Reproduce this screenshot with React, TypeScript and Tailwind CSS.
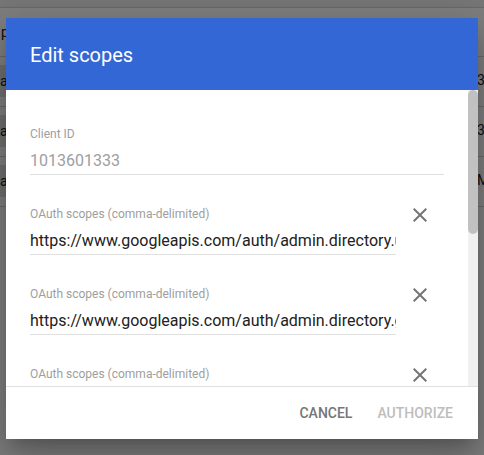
const SCOPES = [
  'https://www.googleapis.com/auth/admin.directory.user',
  'https://www.googleapis.com/auth/admin.directory.group',
  'https://www.googleapis.com/auth/admin.directory.orgunit',
  'https://www.googleapis.com/auth/admin.directory.device.chromeos',
  'https://www.googleapis.com/auth/admin.directory.domain',
  'https://www.googleapis.com/auth/admin.reports.audit.readonly',
];

const ROWS = [
  { left: 'a', right: '3 scopes' },
  { left: 'a', right: '3 scopes' },
  { left: 'a', right: 'Marketing' },
];

const CloseIcon = () => (
  <svg className="h-6 w-6" viewBox="0 0 24 24" fill="#757575">
    <path d="M19 6.41L17.59 5 12 10.59 6.41 5 5 6.41 10.59 12 5 17.59 6.41 19 12 13.41 17.59 19 19 17.59 13.41 12z" />
  </svg>
);

type FieldProps = { label: string; value: string; disabled?: boolean };

const Field = ({ label, value, disabled }: FieldProps) => (
  <div className="flex min-w-0 flex-1 flex-col">
    <span className="text-xs leading-4 text-[#9e9e9e]">{label}</span>
    <input
      readOnly
      value={value}
      className={`mt-1.5 h-[27px] w-full border-b border-[#e0e0e0] bg-transparent p-0 pb-[2px] text-base leading-6 outline-none ${
        disabled ? 'text-[#9e9e9e]' : 'text-[#212121]'
      }`}
    />
  </div>
);

// Admin table sitting behind the modal
const Page = () => (
  <div className="absolute inset-0 bg-white text-sm text-[#212121]">
    <div className="h-2 border-b border-[#d4d4d4] bg-[#eeeeee]" />
    <div className="flex h-[49px] items-center border-b border-[#d4d4d4]">
      <span className="pl-px">pe</span>
    </div>
    {ROWS.map((row, i) => (
      <div key={i} className="flex h-[50px] border-b border-[#d4d4d4]">
        <div className="w-[477px] shrink-0 pt-2">
          <div className="flex h-8 w-[30px] items-center bg-[#e0e0e0]">
            <span>{row.left}</span>
          </div>
        </div>
        <div className="flex items-center whitespace-nowrap pb-1">{row.right}</div>
      </div>
    ))}
  </div>
);

export default function App() {
  return (
    <div className="relative h-[455px] w-[484px] overflow-hidden font-['Roboto','Liberation_Sans',sans-serif]">
      <Page />
      <div className="absolute inset-0 bg-black/50" />

      <div className="absolute left-[6px] top-[18px] flex h-[421px] w-[472px] flex-col bg-white shadow-[0_11px_15px_-7px_rgba(0,0,0,0.2),0_24px_38px_3px_rgba(0,0,0,0.14),0_9px_46px_8px_rgba(0,0,0,0.12)]">
        {/* Header */}
        <div className="h-[72px] shrink-0 bg-[#3367d6] px-6 pt-[23px] text-[20px] leading-7 text-white">Edit scopes</div>

        {/* Fields + scrollbar */}
        <div className="flex h-[296px] shrink-0">
          <div className="min-w-0 flex-1 overflow-hidden">
            <div className="flex flex-col gap-[31px] px-6 pb-[43px] pt-[36px]">
              <Field label="Client ID" value="1013601333" disabled />
              {SCOPES.map(scope => (
                <div key={scope} className="flex items-start">
                  <Field label="OAuth scopes (comma-delimited)" value={scope} />
                  <button className="-mt-[3px] flex w-12 justify-center">
                    <CloseIcon />
                  </button>
                </div>
              ))}
            </div>
          </div>
          <div className="w-[10px] shrink-0 bg-[#f1f1f1]">
            <div className="h-[144px] rounded-full bg-[#c1c1c1]" />
          </div>
        </div>

        {/* Actions */}
        <div className="flex h-[53px] shrink-0 items-center justify-end gap-[9px] border-t border-[#e0e0e0] pr-[17px]">
          <button className="h-9 px-2 text-sm font-medium uppercase text-[#757575]">Cancel</button>
          <button disabled className="h-9 px-2 text-sm font-medium uppercase text-[#bdbdbd]">
            Authorize
          </button>
        </div>
      </div>
    </div>
  );
}
